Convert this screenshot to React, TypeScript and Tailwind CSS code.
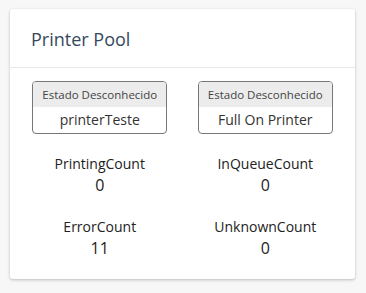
import React from 'react';

const printers = ['printerTeste', 'Full On Printer'];

const stats = [
  { label: 'PrintingCount', value: 0 },
  { label: 'InQueueCount', value: 0 },
  { label: 'ErrorCount', value: 11 },
  { label: 'UnknownCount', value: 0 },
];

const App: React.FC = () => {
  return (
    <div className="w-[366px] h-[293px] bg-[#f7f7f7] pt-[9px] pl-[10px] font-['Open_Sans',sans-serif]">
      <div className="w-[345px] h-[270px] bg-white rounded-[3px] shadow-[0_1px_3px_rgba(0,0,0,0.25)]">
        {/* Header */}
        <div className="h-[59px] border-b border-[#e8e8e8] pl-[21px] pt-[18px]">
          <h2 className="text-[18px] leading-[24px] text-[#34495e]">Printer Pool</h2>
        </div>

        {/* Printers */}
        <div className="grid grid-cols-2 pt-[13px] px-[7px]">
          {printers.map((name) => (
            <div key={name} className="flex justify-center">
              <div className="w-[135px] border border-[#777] rounded-[4px] overflow-hidden text-center">
                <div className="h-[25px] bg-[#ececec] text-[11.5px] leading-[25px] text-[#444]">Estado Desconhecido</div>
                <div className="h-[26px] text-[14px] leading-[25px] text-[#333]">{name}</div>
              </div>
            </div>
          ))}
        </div>

        {/* Counters */}
        <div className="grid grid-cols-2 gap-y-[20px] pt-[19px] px-[7px] text-center text-[#222]">
          {stats.map((s) => (
            <div key={s.label} className="flex flex-col">
              <span className="text-[14px] leading-[21px]">{s.label}</span>
              <span className="text-[16px] leading-[22px]">{s.value}</span>
            </div>
          ))}
        </div>
      </div>
    </div>
  );
};

export default App;
